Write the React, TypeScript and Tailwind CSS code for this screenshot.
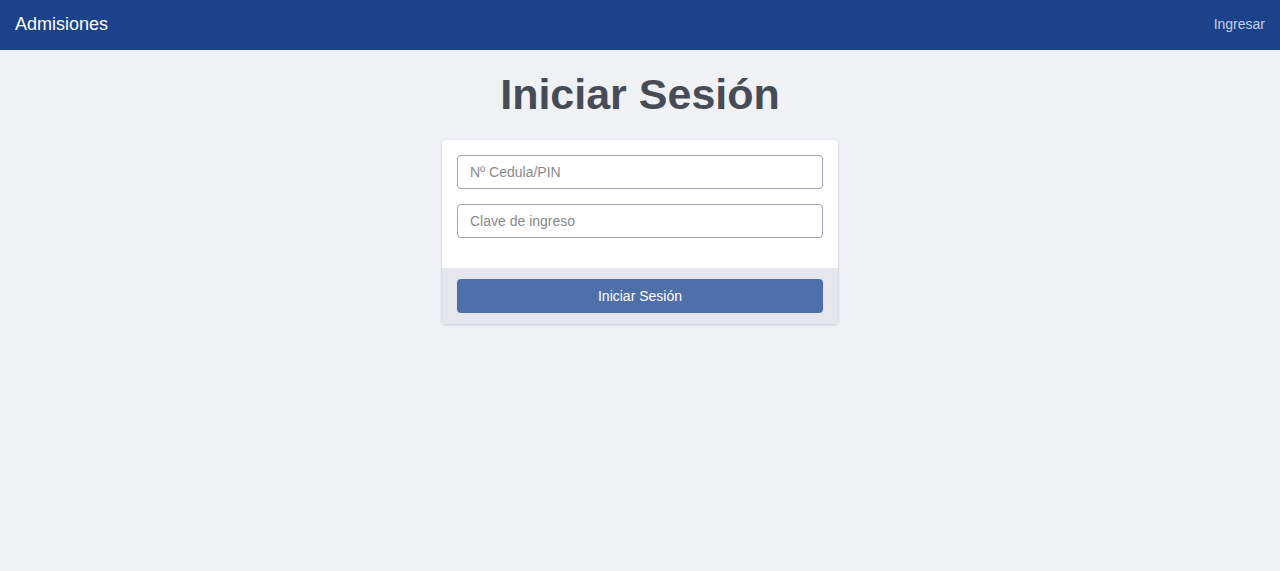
export default function App() {
  return (
    <div className="min-h-[571px] bg-[#f0f1f5] font-['Liberation_Sans',Arial,sans-serif]">
      <nav className="flex h-[50px] items-center justify-between bg-[#1b428a] px-[15px] pb-[2px]">
        <span className="text-[18px] text-white">Admisiones</span>
        <a href="#" className="text-[14px] text-[#c6d0e2]">
          Ingresar
        </a>
      </nav>

      <main className="flex flex-col items-center">
        <h1 className="mt-[18px] mb-[20px] text-[43px] font-bold leading-[52px] text-[#464b55]">Iniciar Sesión</h1>

        <div className="w-[396px] overflow-hidden rounded-[4px] bg-white shadow-[0_1px_3px_rgba(0,0,0,0.18)]">
          <div className="flex flex-col gap-[15px] px-[15px] pt-[15px] pb-[30px]">
            <input
              type="text"
              placeholder="Nº Cedula/PIN"
              className="h-[34px] w-full rounded-[4px] border border-[#9aa3b1] px-3 text-[14px] text-[#333] placeholder:text-[#8a8a8a] outline-none"
            />
            <input
              type="password"
              placeholder="Clave de ingreso"
              className="h-[34px] w-full rounded-[4px] border border-[#9aa3b1] px-3 text-[14px] text-[#333] placeholder:text-[#8a8a8a] outline-none"
            />
          </div>
          <div className="bg-[#e5e7ec] px-[15px] py-[11px]">
            <button className="h-[34px] w-full rounded-[4px] bg-[#4f6fab] text-[14px] text-white">Iniciar Sesión</button>
          </div>
        </div>
      </main>
    </div>
  );
}
